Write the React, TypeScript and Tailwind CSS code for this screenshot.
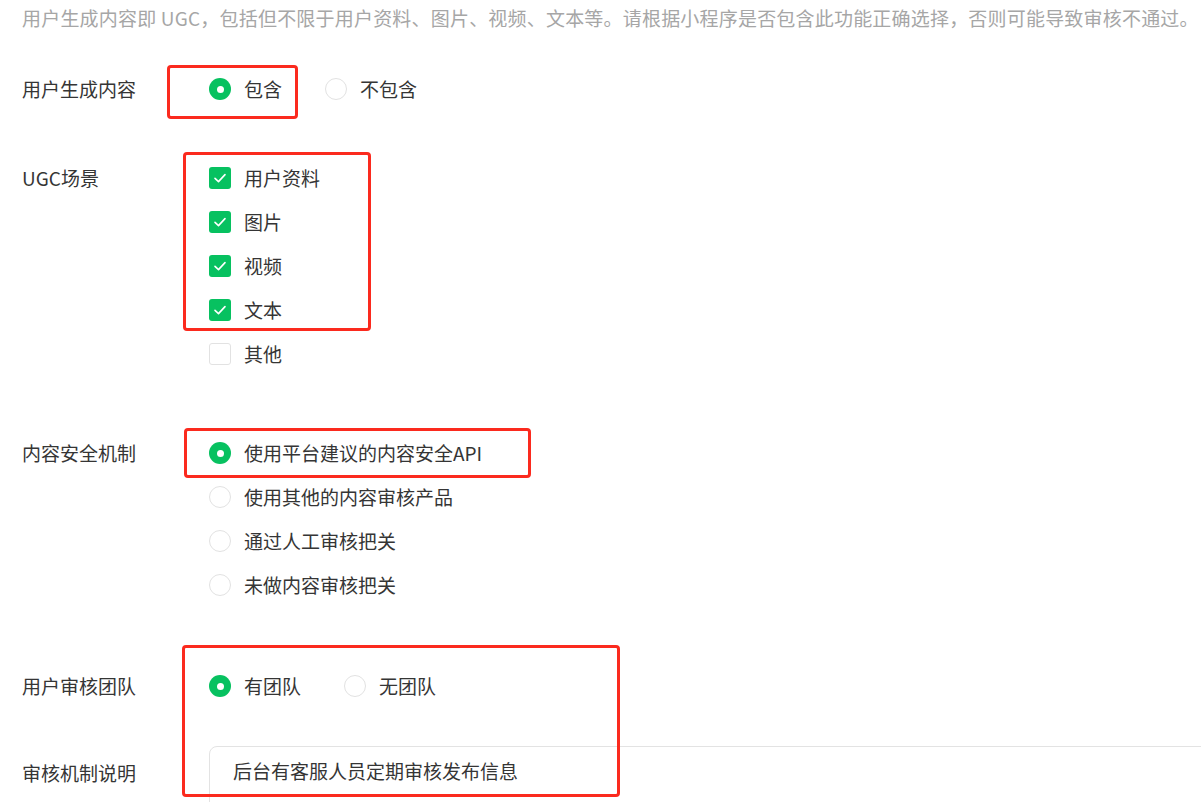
import React from "react";

const Radio = ({ checked, label }: { checked?: boolean; label: string }) => (
  <div className="flex items-center h-[44px]">
    {checked ? (
      <span className="w-[22px] h-[22px] rounded-full bg-[#07c160] flex items-center justify-center shrink-0">
        <span className="w-[7px] h-[7px] rounded-full bg-white" />
      </span>
    ) : (
      <span className="w-[22px] h-[22px] rounded-full border border-[#e2e2e2] bg-white shrink-0" />
    )}
    <span className="ml-[13px] text-[#353535] whitespace-nowrap">{label}</span>
  </div>
);

const Checkbox = ({ checked, label }: { checked?: boolean; label: string }) => (
  <div className="flex items-center h-[44px]">
    {checked ? (
      <span className="w-[22px] h-[22px] rounded-[3px] bg-[#07c160] flex items-center justify-center shrink-0">
        <svg width="16" height="16" viewBox="0 0 16 16" fill="none">
          <path d="M3 8.3 L6.5 11.6 L13 4.6" stroke="white" strokeWidth="1.6" strokeLinecap="round" strokeLinejoin="round" />
        </svg>
      </span>
    ) : (
      <span className="w-[22px] h-[22px] rounded-[3px] border border-[#e2e2e2] bg-white shrink-0" />
    )}
    <span className="ml-[13px] text-[#353535] whitespace-nowrap">{label}</span>
  </div>
);

const Label = ({ children }: { children: React.ReactNode }) => (
  <div className="w-[187px] shrink-0 h-[44px] flex items-center text-[#353535] whitespace-nowrap">{children}</div>
);

const RedBox = ({ cls }: { cls: string }) => (
  <div className={`absolute border-[3px] border-[#fb2a1e] rounded-[4px] pointer-events-none ${cls}`} />
);

export default function App() {
  return (
    <div
      className="relative w-[1201px] h-[802px] overflow-hidden bg-white text-[19px] leading-[26px]"
      style={{ fontFamily: '"Noto Sans CJK SC", "Noto Sans", sans-serif' }}
    >
      <div className="pl-[22px] pt-[5px]">
        <p className="text-[#a6a6a6] whitespace-nowrap leading-[26px] tracking-[0.2px]">
          用户生成内容即 UGC，包括但不限于用户资料、图片、视频、文本等。请根据小程序是否包含此功能正确选择，否则可能导致审核不通过。
        </p>

        <div className="mt-[36px] flex">
          <Label>用户生成内容</Label>
          <div className="flex items-center gap-[43px]">
            <Radio checked label="包含" />
            <Radio label="不包含" />
          </div>
        </div>

        <div className="mt-[45px] flex">
          <Label>UGC场景</Label>
          <div className="flex flex-col">
            <Checkbox checked label="用户资料" />
            <Checkbox checked label="图片" />
            <Checkbox checked label="视频" />
            <Checkbox checked label="文本" />
            <Checkbox label="其他" />
          </div>
        </div>

        <div className="mt-[55px] flex">
          <Label>内容安全机制</Label>
          <div className="flex flex-col">
            <Radio checked label="使用平台建议的内容安全API" />
            <Radio label="使用其他的内容审核产品" />
            <Radio label="通过人工审核把关" />
            <Radio label="未做内容审核把关" />
          </div>
        </div>

        <div className="mt-[57px] flex">
          <Label>用户审核团队</Label>
          <div className="flex items-center gap-[43px]">
            <Radio checked label="有团队" />
            <Radio label="无团队" />
          </div>
        </div>

        <div className="mt-[38px] flex">
          <div className="w-[187px] shrink-0 pt-[14px] text-[#353535] whitespace-nowrap">审核机制说明</div>
          <div className="w-[1100px] h-[120px] shrink-0 border border-[#e3e3e3] rounded-[8px] pl-[23px] pt-[11px] text-[#353535] whitespace-nowrap">
            后台有客服人员定期审核发布信息
          </div>
        </div>
      </div>

      <RedBox cls="left-[167px] top-[65px] w-[131px] h-[54px]" />
      <RedBox cls="left-[183px] top-[152px] w-[188px] h-[179px]" />
      <RedBox cls="left-[184px] top-[428px] w-[347px] h-[50px]" />
      <RedBox cls="left-[182px] top-[645px] w-[438px] h-[152px]" />
    </div>
  );
}
